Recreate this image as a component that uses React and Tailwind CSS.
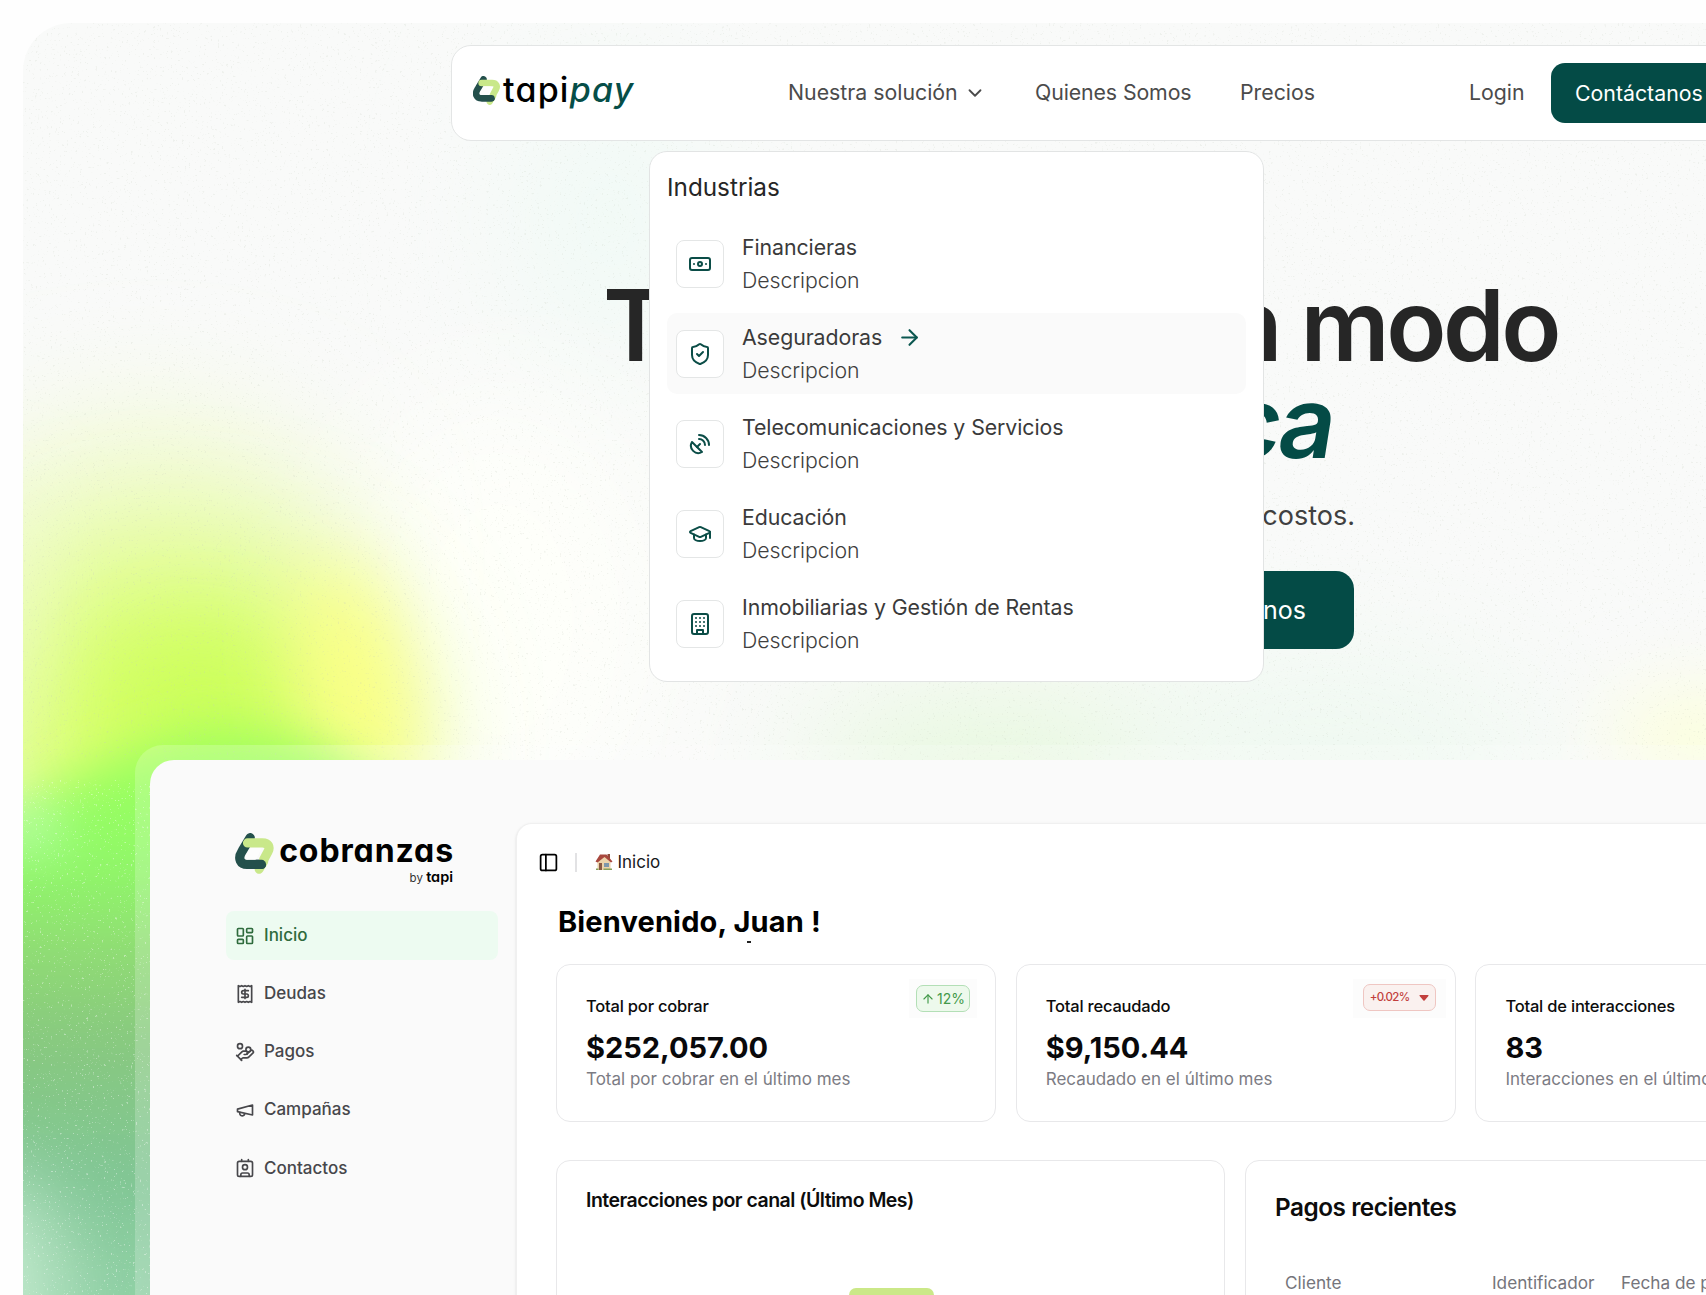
import {
  ArrowRight,
  ArrowUp,
  Banknote,
  ChevronDown,
  Contact,
  GraduationCap,
  HandCoins,
  LayoutDashboard,
  PanelLeft,
  SatelliteDish,
  ShieldCheck,
} from "lucide-react";

const StrokeIcon = ({ className, children }) => (
  <svg
    viewBox="0 0 24 24"
    className={className}
    fill="none"
    stroke="currentColor"
    strokeWidth="2"
    strokeLinecap="round"
    strokeLinejoin="round"
  >
    {children}
  </svg>
);

const BuildingIcon = ({ className }) => (
  <StrokeIcon className={className}>
    <rect x="4" y="2" width="16" height="20" rx="2" />
    <path d="M9 22v-4h6v4" />
    <path d="M8 6h.01M12 6h.01M16 6h.01M8 10h.01M12 10h.01M16 10h.01M8 14h.01M12 14h.01M16 14h.01" />
  </StrokeIcon>
);

const ReceiptIcon = ({ className }) => (
  <StrokeIcon className={className}>
    <path d="M4 2v20l2-1 2 1 2-1 2 1 2-1 2 1 2-1 2 1V2l-2 1-2-1-2 1-2-1-2 1-2-1-2 1Z" />
    <path d="M16 8h-6a2 2 0 1 0 0 4h4a2 2 0 1 1 0 4H8" />
    <path d="M12 17.5v-11" />
  </StrokeIcon>
);

const MegaphoneIcon = ({ className }) => (
  <StrokeIcon className={className}>
    <path d="m3 11 18-5v12L3 14v-3z" />
    <path d="M11.6 16.8a3 3 0 1 1-5.8-1.6" />
  </StrokeIcon>
);

const HouseIcon = () => (
  <svg viewBox="0 0 18 18" className="h-[18px] w-[18px]">
    <path d="M2.5 8 9 3l6.500 5v9h-13z" fill="#ecd3ab" />
    <path d="M12.500 1h2.500v5h-2.500z" fill="#8f4a3a" />
    <path d="M0.500 8.500 5 1.500h6.500L17.500 8.500 16 9.500 9.500 4 2.500 9.500z" fill="#a8483e" />
    <path d="M4 10h3v7H4z" fill="#8a5a44" />
    <path d="M9 10h5v4H9z" fill="#7d97ab" />
    <path d="M1 15.500h2.500V17H1zM8.500 15.500H17V17H8.500z" fill="#86a05a" />
  </svg>
);

const LogoMark = ({ className }) => (
  <svg viewBox="46 42 116 124" className={className} fill="none" strokeLinecap="round" strokeLinejoin="round">
    <path d="M118 152 132 128" stroke="#c9e88a" strokeWidth="27" />
    <path d="M91 56C84 68 74 84 66 98C52 120 62 137 82 137H125" stroke="#24504c" strokeWidth="28" />
    <path d="M83 72H128C146 72 152 84 145 98L132 122" stroke="#c9e88a" strokeWidth="28" />
    <path d="M86 137H125" stroke="#24504c" strokeWidth="28" />
    <path d="M92 87H120Q126 87 123 93L110 121Q108 123 105 123H81Q73 122 77 113Z" fill="#fdfdfd" />
  </svg>
);

const industries = [
  { name: "Financieras", icon: Banknote },
  { name: "Aseguradoras", icon: ShieldCheck, active: true },
  { name: "Telecomunicaciones y Servicios", icon: SatelliteDish },
  { name: "Educación", icon: GraduationCap },
  { name: "Inmobiliarias y Gestión de Rentas", icon: BuildingIcon },
];

const menuItems = [
  { label: "Inicio", icon: LayoutDashboard, active: true },
  { label: "Deudas", icon: ReceiptIcon },
  { label: "Pagos", icon: HandCoins },
  { label: "Campañas", icon: MegaphoneIcon },
  { label: "Contactos", icon: Contact },
];

const stats = [
  { title: "Total por cobrar", value: "$252,057.00", note: "Total por cobrar en el último mes", badge: "up" },
  { title: "Total recaudado", value: "$9,150.44", note: "Recaudado en el último mes", badge: "down" },
  { title: "Total de interacciones", value: "83", note: "Interacciones en el último mes" },
];

// Blurred colour field with a fine grain on top
const Backdrop = () => (
  <svg viewBox="23 23 1683 1272" className="absolute inset-0 h-[1272px] w-[1683px]">
    <defs>
      <linearGradient id="column" gradientUnits="userSpaceOnUse" x1="0" y1="700" x2="0" y2="1295">
        <stop offset="0" stopColor="#a8ff54" stopOpacity="0.8" />
        <stop offset="0.14" stopColor="#98ff60" />
        <stop offset="0.28" stopColor="#90f868" />
        <stop offset="0.42" stopColor="#90dc74" />
        <stop offset="0.56" stopColor="#88c97e" />
        <stop offset="0.8" stopColor="#80c594" />
        <stop offset="1" stopColor="#90d0a5" />
      </linearGradient>
      <filter id="blur60" x="-100%" y="-100%" width="300%" height="300%">
        <feGaussianBlur stdDeviation="65" />
      </filter>
      <filter id="blur40" x="-100%" y="-100%" width="300%" height="300%">
        <feGaussianBlur stdDeviation="40" />
      </filter>
      <filter id="blur20" x="-100%" y="-100%" width="300%" height="300%">
        <feGaussianBlur stdDeviation="24" />
      </filter>
      <filter id="grainDark" x="0" y="0" width="100%" height="100%">
        <feTurbulence type="fractalNoise" baseFrequency="0.45" numOctaves="2" seed="4" />
        <feColorMatrix values="0 0 0 0 0.55  0 0 0 0 0.6  0 0 0 0 0.5  0 0 0 9 -6" />
      </filter>
      <filter id="grainLight" x="0" y="0" width="100%" height="100%">
        <feTurbulence type="fractalNoise" baseFrequency="0.45" numOctaves="2" seed="11" />
        <feColorMatrix values="0 0 0 0 1  0 0 0 0 1  0 0 0 0 1  0 0 0 9 -6.1" />
      </filter>
    </defs>
    <rect x="23" y="23" width="1683" height="1272" fill="#f9faf9" />
    <ellipse cx="610" cy="220" rx="100" ry="150" fill="#f1faf6" filter="url(#blur60)" />
    <ellipse cx="500" cy="620" rx="160" ry="220" fill="#fefffa" filter="url(#blur60)" />
    <ellipse cx="1000" cy="770" rx="200" ry="70" fill="#e4f8da" filter="url(#blur60)" />
    <ellipse cx="1330" cy="760" rx="220" ry="100" fill="#eff9f1" filter="url(#blur60)" />
    <ellipse cx="1700" cy="740" rx="90" ry="50" fill="#fcffdc" filter="url(#blur40)" />
    <ellipse cx="150" cy="560" rx="190" ry="130" fill="#effbc8" filter="url(#blur60)" />
    <ellipse cx="180" cy="740" rx="220" ry="185" fill="#d8ff6c" filter="url(#blur60)" />
    <ellipse cx="200" cy="710" rx="90" ry="80" fill="#c8ff54" opacity="0.7" filter="url(#blur40)" />
    <ellipse cx="356" cy="690" rx="44" ry="130" fill="#ffff80" transform="rotate(-12 356 690)" filter="url(#blur40)" />
    <ellipse cx="10" cy="620" rx="34" ry="150" fill="#f0fcc8" opacity="0.6" filter="url(#blur40)" />
    <path d="M-60 870Q90 755 200 728Q320 722 390 800V1450H-60Z" fill="url(#column)" filter="url(#blur20)" />
    <ellipse cx="30" cy="830" rx="36" ry="28" fill="#b8ffae" opacity="0.75" filter="url(#blur20)" />
    <ellipse cx="-10" cy="1290" rx="70" ry="120" fill="#c8ecd2" opacity="0.9" filter="url(#blur40)" />
    <rect x="23" y="23" width="1683" height="737" filter="url(#grainDark)" opacity="0.2" />
    <rect x="23" y="780" width="130" height="515" filter="url(#grainLight)" opacity="0.4" />
  </svg>
);

const Navbar = () => (
  <nav className="relative ml-[428px] mt-[22px] flex h-[96px] w-[1300px] shrink-0 items-center rounded-[20px] border-[1.5px] border-[#e3e5e5] bg-white text-[21.300px] text-[#4b4b4b]">
    <div className="ml-[21px] flex w-[315px] items-center">
      <LogoMark className="-mt-[5px] h-[29px] w-[27px]" />
      <span className="-mt-[6px] ml-[3px] text-[34px] font-medium leading-none tracking-[1.200px] text-black [font-feature-settings:'cv11']">
        tapi<span className="italic text-[#064e48]">pay</span>
      </span>
    </div>
    <div className="flex w-[247px] items-center gap-[6px]">
      <span>Nuestra solución</span>
      <ChevronDown className="h-[22px] w-[22px]" />
    </div>
    <span className="w-[205px] tracking-[-0.100px]">Quienes Somos</span>
    <span className="w-[229px]">Precios</span>
    <span className="w-[82px]">Login</span>
    <button className="h-[60px] w-[178px] rounded-[14px] bg-[#044b46] pl-[24px] pt-px text-left text-white">
      Contáctanos
    </button>
  </nav>
);

const IndustriesMenu = () => (
  <div className="absolute left-[626px] top-[128px] flex h-[531px] w-[615px] flex-col rounded-[18px] border-[1.5px] border-[#e2e4e4] bg-white px-[17px] pt-[17px]">
    <h2 className="mb-[17px] text-[24.300px] leading-[37px] text-[#262626]">Industrias</h2>
    <ul className="flex flex-col gap-[9px]">
      {industries.map(({ name, icon: Icon, active }) => (
        <li
          key={name}
          className={`flex h-[81px] items-center gap-[18px] rounded-[10px] px-[9px] ${active ? "bg-[#fafafa]" : ""}`}
        >
          <div className="flex h-[48px] w-[48px] items-center justify-center rounded-[8px] border-[1.5px] border-[#e4e6e6] bg-white">
            <Icon className="h-[24px] w-[24px] text-[#0b4d47]" />
          </div>
          <div className="text-[21.300px] leading-[33px] tracking-[-0.070px] text-[#404040]">
            <div className="flex items-center gap-[15px] text-[#3a3a3a]">
              {name}
              {active && <ArrowRight className="h-[25px] w-[25px] text-[#0b5750]" />}
            </div>
            <p className="font-[360]">Descripcion</p>
          </div>
        </li>
      ))}
    </ul>
  </div>
);

const Hero = () => (
  <section className="relative mt-[136px] flex h-[468px] w-[1683px] shrink-0 flex-col pl-[580px]">
    <h1 className="w-[955px] text-[99px] font-semibold leading-[97px] tracking-[-3.500px] text-[#262626]">
      <span className="flex justify-between">
        <span>T</span>
        <span>n modo</span>
      </span>
      {/* slanted upright keeps the two-storey "a" */}
      <span className="flex w-[730px] justify-end text-[#044b46]">
        <span className="-skew-x-[9deg]">ca</span>
      </span>
    </h1>
    <p className="mt-[25px] w-[752px] text-right text-[27px] leading-[40px] text-[#404040]">costos.</p>
    <button className="ml-[604px] mt-[35px] h-[78px] w-[147px] rounded-[18px] bg-[#044b46] pr-[48px] pt-[2px] text-right text-[25px] text-white">
      nos
    </button>
  </section>
);

const Sidebar = () => (
  <aside className="w-[366px] shrink-0 pl-[76px] pt-[73px]">
    <div className="flex h-[78px] pl-[9px]">
      <LogoMark className="h-[41px] w-[39px]" />
      <div className="flex w-[180px] flex-col items-end">
        <p className="text-[32px] font-bold leading-[36px] tracking-[0.900px] text-black [font-feature-settings:'cv11']">
          cobranzas
        </p>
        <p className="-mt-px pr-px text-[11.500px] leading-[18px] text-[#333] [font-feature-settings:'cv11']">
          by <span className="text-[14.500px] font-semibold text-black">tapi</span>
        </p>
      </div>
    </div>
    <ul className="flex w-[272px] flex-col gap-[9.200px]">
      {menuItems.map(({ label, icon: Icon, active }) => (
        <li
          key={label}
          className={`flex h-[49px] items-center gap-[9px] rounded-[8px] pl-[9px] text-[17px] font-medium ${
            active ? "bg-[#edfbf1] text-[#2f6b3d]" : "text-[#47474b]"
          }`}
        >
          <Icon className="h-[20px] w-[20px]" />
          {label}
        </li>
      ))}
    </ul>
  </aside>
);

const StatCard = ({ title, value, note, badge }) => (
  <div className="relative h-[158px] w-[440px] shrink-0 rounded-[14px] border-[1.5px] border-[#e8e8ea] pl-[29px] pt-[29px]">
    <p className="whitespace-nowrap text-[16.500px] font-medium leading-[24px] tracking-[-0.200px] text-[#0c0c0c]">
      {title}
    </p>
    <p className="mt-[12px] text-[29px] font-bold leading-[36px] text-[#09090b]">{value}</p>
    <p className="mt-px whitespace-nowrap text-[17px] leading-[24px] text-[#7c7c84]">{note}</p>
    {badge === "up" && (
      <div className="absolute right-[18px] top-[14px] bg-[#fcfcfc] px-[7px] py-[6px]">
        <div className="flex h-[27px] w-[54px] items-center justify-center gap-[2px] rounded-[7px] border border-[#b3dfb6] bg-[#edf9ec] text-[14px] text-[#43994a]">
          <ArrowUp className="h-[14px] w-[14px]" />
          12%
        </div>
      </div>
    )}
    {badge === "down" && (
      <div className="absolute right-[9px] top-[14px] bg-[#fcfcfc] px-[10px] pb-[7px] pt-[5px]">
        <div className="flex h-[27px] w-[73px] items-center justify-between rounded-[7px] border border-[#efc6c2] bg-[#faf1ef] px-[6px] text-[11.500px] font-medium tracking-[-0.700px] text-[#c23f3d]">
          +0.02%
          <svg viewBox="0 0 10 6" className="h-[6px] w-[10px]">
            <path d="M1 0h8q1 0 .4 1L5.600 5.600q-.6.5-1.200 0L.6 1Q0 0 1 0z" fill="#c23f3d" />
          </svg>
        </div>
      </div>
    )}
  </div>
);

const Dashboard = () => (
  <section className="relative ml-[112px] h-[550px] w-[1600px] shrink-0 rounded-tl-[28px] bg-white/20 pl-[15px] pt-[15px]">
    <div className="flex h-[540px] w-[1600px] overflow-hidden rounded-tl-[24px] bg-[#fafafa]">
      <Sidebar />
      <main className="mt-[63px] flex w-[1400px] shrink-0 flex-col overflow-hidden rounded-tl-[16px] border-l border-t border-[#f0f0f0] bg-white pl-[39px] shadow-sm">
        <header className="-ml-[19px] mt-[25px] flex h-[26px] shrink-0 items-center">
          <PanelLeft className="ml-px h-[21px] w-[21px]" />
          <div className="ml-[16px] h-[19px] w-[1.500px] bg-[#e2e2e4]" />
          <div className="ml-[18px] mr-[5px]">
            <HouseIcon />
          </div>
          <span className="pt-px text-[17px] text-[#18181b]">Inicio</span>
        </header>
        <div className="relative mt-[27px] h-[62px] shrink-0 pl-[2px]">
          <h2 className="text-[29px] font-bold leading-[40px] tracking-[0.150px] text-black">Bienvenido, Juan !</h2>
          <span className="absolute left-[191px] top-[39px] h-[2px] w-[4px] bg-[#222]" />
        </div>
        <div className="flex gap-[19.700px]">
          {stats.map((stat) => (
            <StatCard key={stat.title} {...stat} />
          ))}
        </div>
        <div className="mt-[38px] flex gap-[20px]">
          <div className="h-[220px] w-[669px] shrink-0 rounded-[14px] border-[1.5px] border-[#e8e8ea] pl-[29px] pt-[24px]">
            <h3 className="text-[19.500px] font-semibold leading-[30px] tracking-[-0.520px] text-[#0c0c0c]">
              Interacciones por canal (Último Mes)
            </h3>
            <div className="ml-[263px] mt-[73px] h-[60px] w-[85px] rounded-t-[7px] bg-[#cbe888]" />
          </div>
          <div className="h-[220px] w-[700px] shrink-0 rounded-[14px] border-[1.5px] border-[#e8e8ea] pl-[29px] pt-[29px]">
            <h3 className="text-[24.300px] font-semibold leading-[34px] tracking-[-0.450px] text-[#0c0c0c]">
              Pagos recientes
            </h3>
            <div className="mt-[47px] flex whitespace-nowrap pl-[10px] text-[17.200px] leading-[24px] text-[#75757b]">
              <span className="w-[207px]">Cliente</span>
              <span className="w-[129px]">Identificador</span>
              <span>Fecha de pago</span>
            </div>
          </div>
        </div>
      </main>
    </div>
  </section>
);

export default function App() {
  return (
    <div className="h-[1295px] w-[1706px] overflow-hidden bg-[#fefefe] pl-[23px] pt-[23px] font-['Inter',sans-serif]">
      <div className="relative flex h-[1272px] w-[1683px] flex-col overflow-hidden rounded-tl-[48px]">
        <Backdrop />
        <Navbar />
        <Hero />
        <Dashboard />
        <IndustriesMenu />
      </div>
    </div>
  );
}
